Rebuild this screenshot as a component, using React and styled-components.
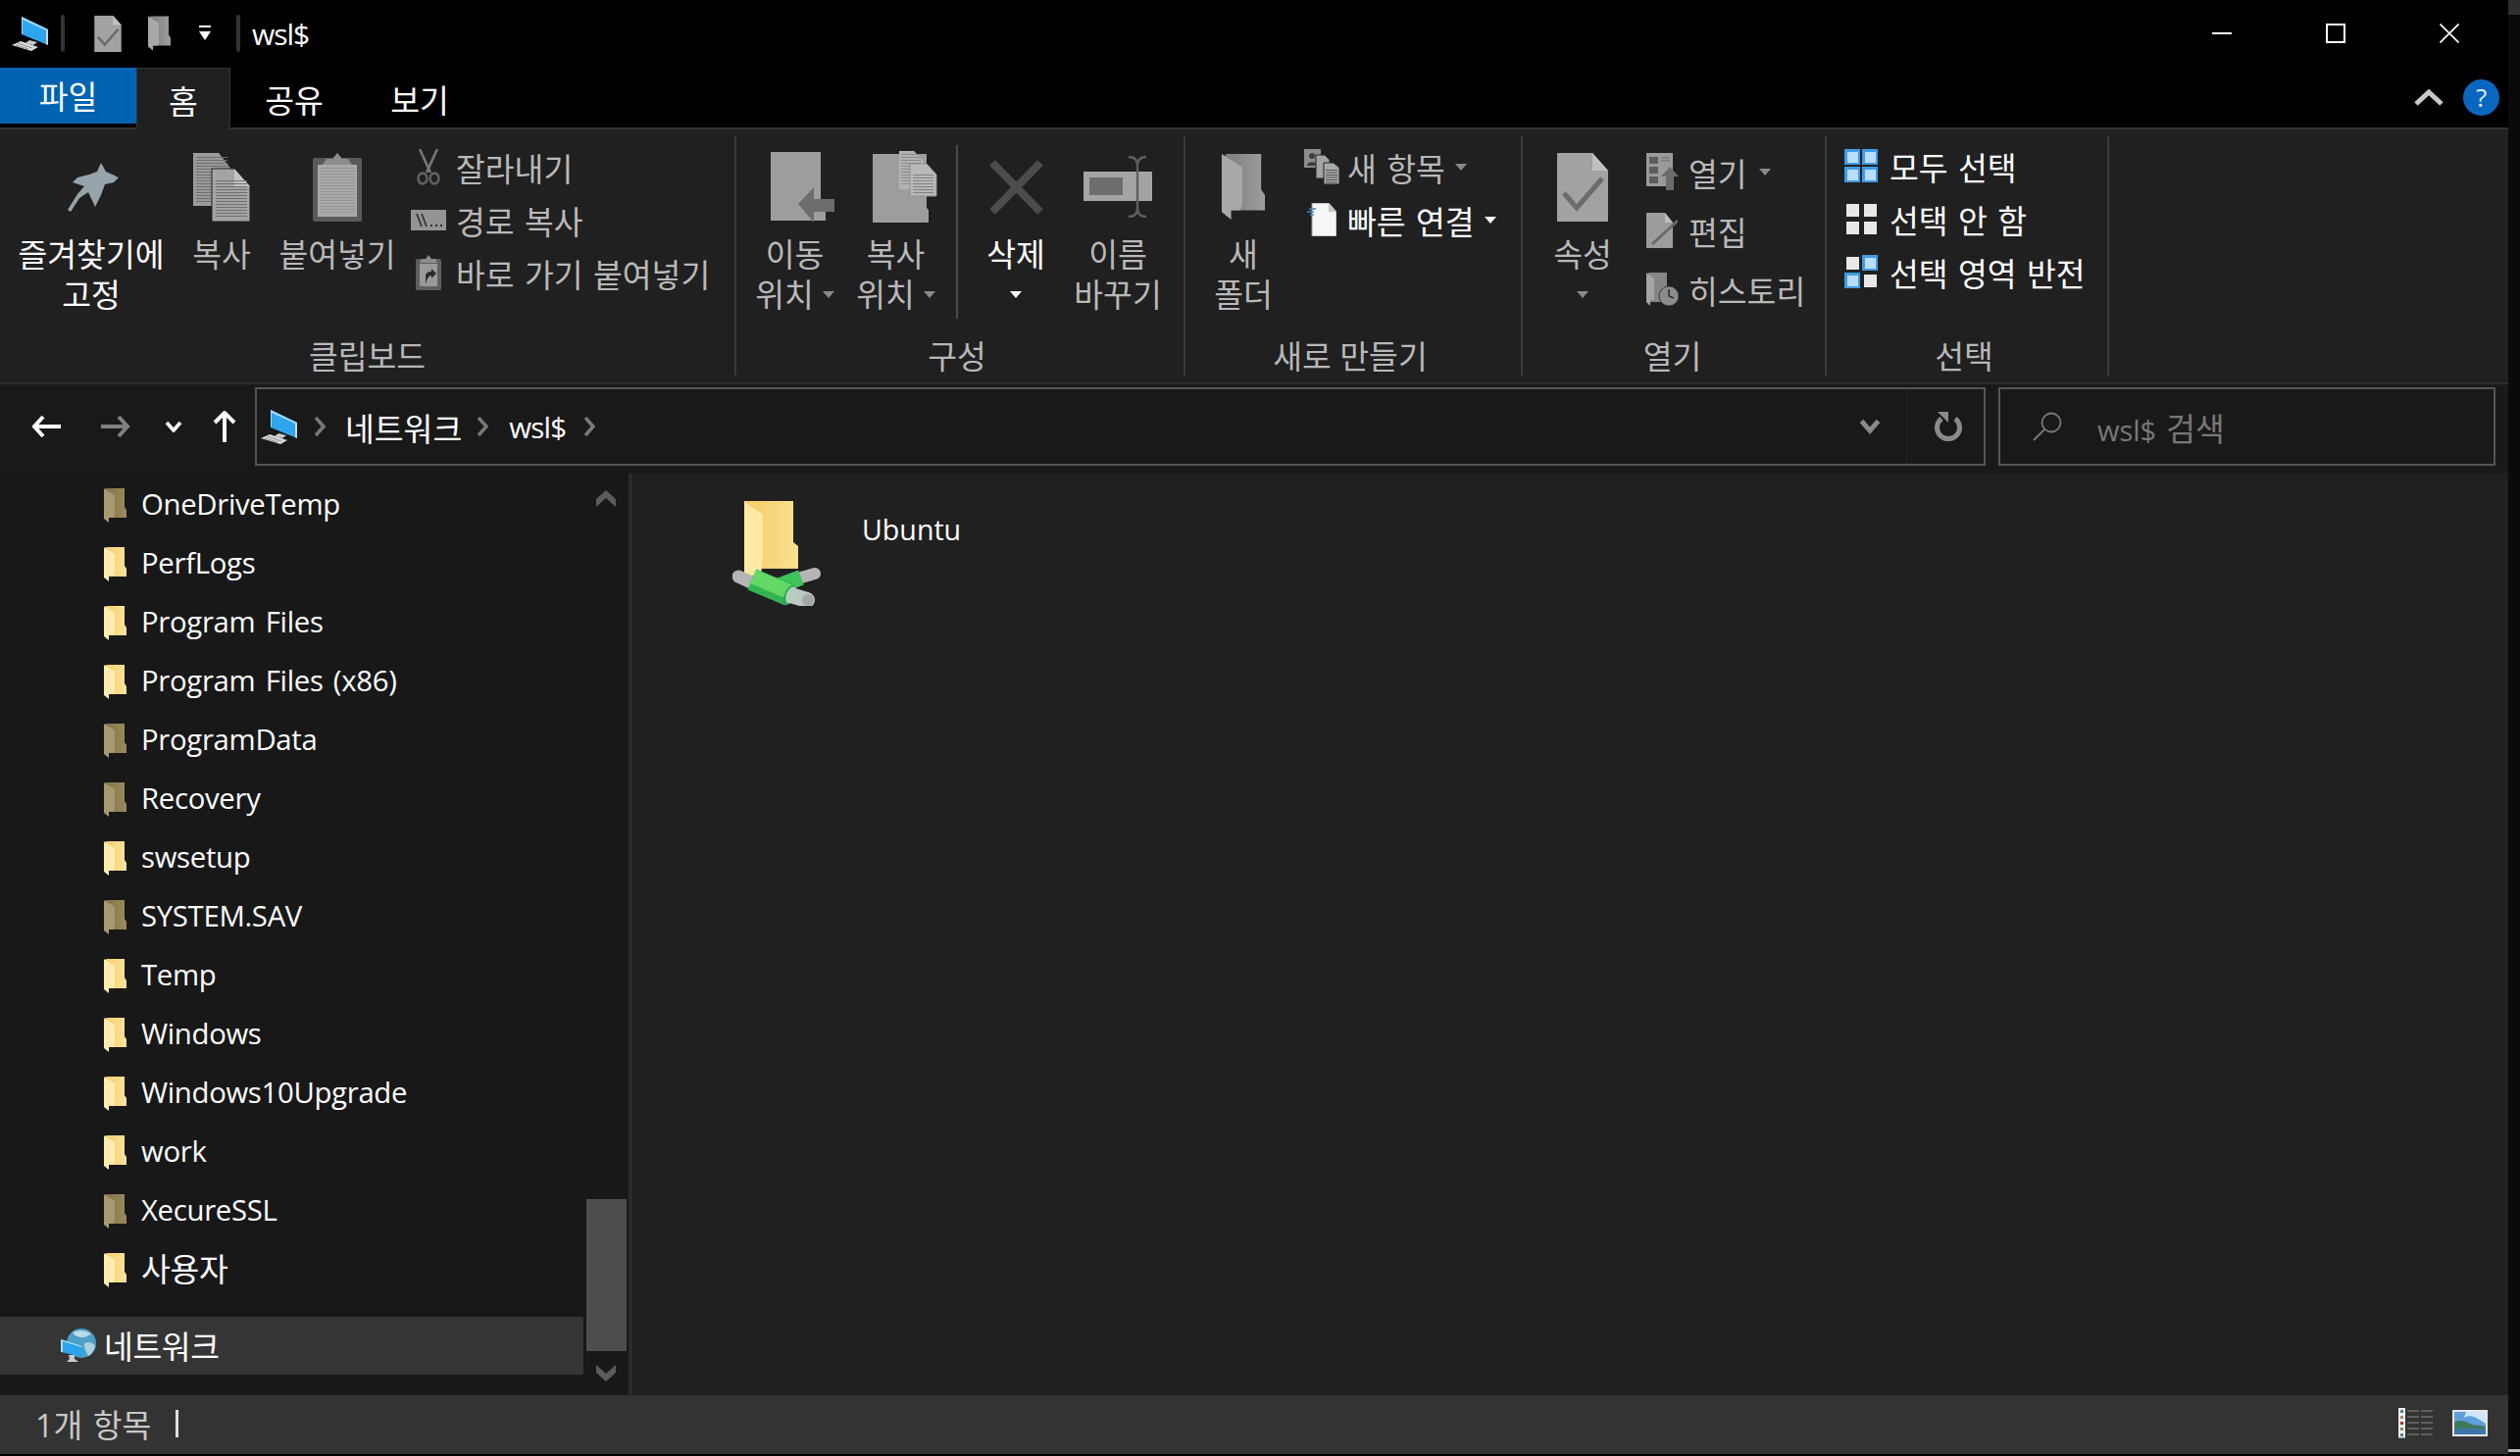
import styled, { createGlobalStyle } from "styled-components";

const GlobalStyle = createGlobalStyle`
  html, body {
    margin: 0;
    height: 100%;
    background: #000;
    overflow: hidden;
  }
  body {
    font-family: "Open Sans", "Noto Sans CJK KR", "Noto Sans", sans-serif;
    font-size: 30px;
    color: #fff;
  }
`;

const KO_SIZE = "32.4px";

const Screen = styled.div`
  display: flex;
  width: 2570px;
  height: 1485px;
  background: #000;
`;

const Win = styled.div`
  display: flex;
  flex-direction: column;
  width: 2558px;
  height: 1483px;
`;

const EdgeStrip = styled.div`
  flex: 1;
  display: flex;
  flex-direction: column;
  justify-content: flex-end;
  padding-bottom: 4px;
  background: linear-gradient(#2e2e2e 0, #2e2e2e 15px, #0a0a0a 15px);
`;

const EdgeBit = styled.div`
  height: 3px;
  background: #bbb;
`;

/* title bar */
const TitleBar = styled.div`
  display: flex;
  align-items: center;
  height: 68px;
  flex: none;
  background: #000;
`;

const QuickGroup = styled.div`
  display: flex;
  align-items: center;
  padding-left: 12px;
`;

const TitleSep = styled.div`
  width: 4px;
  height: 38px;
  border-radius: 2px;
  background: #333;
  margin: ${(p) => p.$m};
`;

const QuickIcon = styled.span`
  display: flex;
  margin-right: ${(p) => p.$mr}px;
`;

const TitleText = styled.div`
  font-size: 30px;
  letter-spacing: -1px;
  margin-left: 12px;
`;

const WinControls = styled.div`
  display: flex;
  margin-left: auto;
  margin-right: 2px;
`;

const WinBtn = styled.div`
  width: 116px;
  height: 46px;
  display: flex;
  align-items: center;
  justify-content: center;
`;

/* tabs */
const TabRow = styled.div`
  display: flex;
  align-items: flex-start;
  height: 64px;
  flex: none;
  background: #000;
  border-bottom: 2px solid #343434;
  box-sizing: border-box;
`;

const FileTab = styled.div`
  width: 139px;
  height: 57px;
  margin-top: 1px;
  background: #0063b1;
  text-align: center;
  line-height: 58px;
  font-size: ${KO_SIZE};
`;

const Tab = styled.div`
  width: ${(p) => p.$w}px;
  height: 63px;
  margin-top: 1px;
  text-align: center;
  line-height: 66px;
  font-size: ${KO_SIZE};
  box-sizing: border-box;
  background: ${(p) => (p.$active ? "#202020" : "transparent")};
  border: ${(p) => (p.$active ? "1px solid #343434" : "none")};
  border-bottom: none;
`;

const HelpArea = styled.div`
  display: flex;
  align-items: center;
  gap: 20px;
  margin-left: auto;
  padding: 13px 9px 0 0;
`;

const HelpCircle = styled.div`
  width: 37px;
  height: 37px;
  border-radius: 50%;
  background: #0a67bf;
  text-align: center;
  line-height: 37px;
  font-size: 26px;
  color: #dcebf8;
`;

/* ribbon */
const Ribbon = styled.div`
  display: flex;
  height: 260px;
  flex: none;
  padding-top: 7px;
  box-sizing: border-box;
  background: #202020;
  border-bottom: 2px solid #2e2e2e;
`;

const Group = styled.div`
  width: ${(p) => p.$w}px;
  height: 244px;
  flex: none;
  display: flex;
  flex-direction: column;
  box-sizing: border-box;
  border-right: 2px solid #3a3a3a;
`;

const GroupBody = styled.div`
  display: flex;
  flex: 1;
  padding-left: ${(p) => p.$pl || 0}px;
  min-height: 0;
`;

const GroupLabel = styled.div`
  height: 44px;
  padding-right: ${(p) => p.$pr || 0}px;
  text-align: center;
  color: #b8b8b8;
  font-size: ${KO_SIZE};
  line-height: 48px;
`;

const LargeBtn = styled.div`
  width: ${(p) => p.$w}px;
  flex: none;
  display: flex;
  flex-direction: column;
  align-items: center;
  color: ${(p) => (p.$on ? "#fff" : "#b9b9b9")};
`;

const IconSlot = styled.div`
  height: 90px;
  flex: none;
  display: flex;
  align-items: center;
  justify-content: center;
  padding-top: 13px;
  padding-left: ${(p) => p.$dx || 0}px;
  box-sizing: border-box;
  margin-bottom: 10px;
`;

const LabelLine = styled.div`
  display: flex;
  align-items: center;
  gap: 9px;
  height: 41px;
  line-height: 41px;
  white-space: nowrap;
  font-size: ${KO_SIZE};
`;

const InnerSep = styled.div`
  width: 2px;
  height: 177px;
  margin: 9px 0 0 10px;
  flex: none;
  background: #4a4a4a;
`;

const SmallCol = styled.div`
  display: flex;
  flex-direction: column;
  margin: ${(p) => p.$m};
`;

const SmallBtn = styled.div`
  display: flex;
  align-items: center;
  height: ${(p) => p.$h}px;
  white-space: nowrap;
  font-size: ${KO_SIZE};
  word-spacing: 2px;
  color: ${(p) => (p.$on ? "#fff" : "#b9b9b9")};
`;

const SmallIcon = styled.span`
  width: ${(p) => p.$w}px;
  flex: none;
  display: flex;
  justify-content: center;
`;

const Caret = styled.span`
  width: 0;
  height: 0;
  flex: none;
  margin-left: ${(p) => p.$ml || 0}px;
  border-left: 6px solid transparent;
  border-right: 6px solid transparent;
  border-top: 7px solid ${(p) => (p.$on ? "#fff" : "#8a8a8a")};
`;

/* nav row */
const NavRow = styled.div`
  display: flex;
  align-items: center;
  height: 91px;
  flex: none;
  box-sizing: border-box;
  background: #191919;
  padding-bottom: 5px;
`;

const NavBtns = styled.div`
  display: flex;
  align-items: center;
  width: 260px;
  flex: none;
  padding-left: 32px;
  box-sizing: border-box;
`;

const NavBtn = styled.span`
  display: flex;
  margin-right: ${(p) => p.$mr}px;
`;

const AddressBox = styled.div`
  display: flex;
  align-items: center;
  width: 1765px;
  height: 80px;
  flex: none;
  box-sizing: border-box;
  border: 2px solid #555;
  padding-left: 4px;
`;

const CrumbIcon = styled.span`
  display: flex;
  margin-right: 17px;
`;

const Crumb = styled.span`
  font-size: ${(p) => (p.$ko ? KO_SIZE : "29.5px")};
  letter-spacing: ${(p) => p.$ls || 0}px;
  margin: 0 ${(p) => p.$mr}px 0 ${(p) => p.$ml}px;
`;

const AddressEnd = styled.div`
  display: flex;
  align-items: center;
  height: 100%;
  margin-left: auto;
`;

const DropZone = styled.div`
  width: 78px;
  height: 100%;
  display: flex;
  align-items: center;
  justify-content: center;
  border-right: 1px solid #222;
  padding-left: 2px;
  box-sizing: border-box;
`;

const RefreshZone = styled.div`
  width: 78px;
  display: flex;
  justify-content: center;
  padding-left: 6px;
  box-sizing: border-box;
`;

const SearchBox = styled.div`
  display: flex;
  align-items: center;
  width: 507px;
  height: 80px;
  margin-left: 13px;
  flex: none;
  box-sizing: border-box;
  border: 2px solid #555;
  padding-left: 33px;
  gap: 36px;
  color: #777;
  font-size: 29px;
`;

const SearchWord = styled.span`
  font-size: ${KO_SIZE};
  margin-left: 10px;
`;

/* content */
const Content = styled.div`
  display: flex;
  flex: 1;
  min-height: 0;
`;

const Sidebar = styled.div`
  display: flex;
  width: 641px;
  flex: none;
  background: #181818;
`;

const TreeList = styled.div`
  width: 595px;
  flex: none;
  padding-top: 2px;
`;

const TreeRow = styled.div`
  display: flex;
  align-items: center;
  height: 60px;
  padding-left: 106px;
  gap: 15px;
`;

const TreeName = styled.span`
  font-size: ${(p) => (p.$ko ? KO_SIZE : "29.3px")};
  word-spacing: 3px;
  letter-spacing: -0.3px;
  margin-bottom: ${(p) => (p.$ko ? 6 : 3)}px;
`;

const NetworkRow = styled.div`
  display: flex;
  align-items: center;
  gap: 8px;
  height: 59px;
  margin-top: 18px;
  padding-left: 62px;
  background: #353535;
  font-size: ${KO_SIZE};
  letter-spacing: -0.4px;
`;

const NetworkName = styled.span`
  margin-bottom: 2px;
`;

const ScrollCol = styled.div`
  width: 46px;
  flex: none;
  display: flex;
  flex-direction: column;
  align-items: center;
  padding: 17px 0 14px;
  box-sizing: border-box;
`;

const ScrollTrack = styled.div`
  flex: 1;
  width: 41px;
  display: flex;
  align-items: flex-end;
`;

const ScrollThumb = styled.div`
  width: 100%;
  height: 155px;
  margin-bottom: 14px;
  background: #4d4d4d;
`;

const Splitter = styled.div`
  width: 4px;
  flex: none;
  background: #2b2b2b;
`;

const Main = styled.div`
  flex: 1;
  background: #202020;
  padding: 28px 0 0 102px;
`;

const Tile = styled.div`
  display: flex;
  align-items: flex-start;
  gap: 42px;
`;

const TileName = styled.div`
  font-size: 28.6px;
  line-height: 58px;
`;

/* status bar */
const StatusBar = styled.div`
  display: flex;
  align-items: center;
  height: 60px;
  flex: none;
  padding: 0 21px 3px 36px;
  box-sizing: border-box;
  background: #333;
  color: #c8c8c8;
  font-size: ${KO_SIZE};
  word-spacing: 2px;
`;

const StatusSep = styled.div`
  width: 3px;
  height: 28px;
  margin-left: 25px;
  background: #e0e0e0;
`;

const ViewIcons = styled.div`
  display: flex;
  align-items: center;
  gap: 19px;
  margin-left: auto;
`;

/* icons */
const folderTones = {
  yellow: ["#f6cf6e", "#fbe39a", "#ffedb0"],
  dim: ["#85744a", "#9a8a5c", "#a89a70"],
  gray: ["#7d7d7d", "#9e9e9e", "#a8a8a8"],
};

function Folder({ tone = "yellow", w = 23, h = 35 }) {
  const [a, b, c] = folderTones[tone];
  const id = `fold-${tone}`;
  return (
    <svg width={w} height={h} viewBox="0 0 23 35">
      <defs>
        <linearGradient id={id} x1="0" x2="1" y1="0" y2="0">
          <stop offset="0" stopColor={a} />
          <stop offset="1" stopColor={b} />
        </linearGradient>
      </defs>
      <path d="M2 0H21V19L23 22V30H2Z" fill={`url(#${id})`} />
      <path d="M0 0L11 7V26L10 30H5V35L0 31Z" fill={c} />
    </svg>
  );
}

function ComputerIcon({ w = 37, h = 35 }) {
  return (
    <svg width={w} height={h} viewBox="0 0 37 35">
      <path d="M10 0L37 13V29L10 18Z" fill="#2ea6ee" />
      <path d="M10 0L37 13L35 14L11 3V17L10 18Z" fill="#9edcff" />
      <path d="M35 14V28L37 29V13Z" fill="#cfd6da" />
      <path d="M18 24L26 26L22 29L14 27Z" fill="#c9cdd0" />
      <path d="M9 25L27 31L20 35L0 29Z" fill="#d8dadb" />
      <path d="M6 27L21 32M4 29L17 33" stroke="#8d8f90" strokeWidth="1" />
    </svg>
  );
}

function NetworkIcon() {
  return (
    <svg width="36" height="36" viewBox="0 0 36 36">
      <circle cx="21" cy="15" r="15" fill="#4d9fc6" />
      <path d="M12 4C17 1 26 1 31 6C27 7 25 10 21 9C17 8 14 8 12 4Z" fill="#b7dbe8" />
      <path d="M24 15C28 13 33 14 35 18C34 23 31 27 28 28C26 24 23 19 24 15Z" fill="#a9d0df" />
      <path d="M0 11L22 18V29L0 24Z" fill="#2ca3ea" />
      <path d="M0 11L22 18L21 19L2 13V24L0 24Z" fill="#a8e0fb" />
      <path d="M8 27H14V31L18 34H6L9 31Z" fill="#c8ccce" />
    </svg>
  );
}

function NetworkFolderIcon() {
  return (
    <svg width="90" height="107" viewBox="0 0 90 107">
      <defs>
        <linearGradient id="share-back" x1="0" x2="1" y1="0" y2="0">
          <stop offset="0" stopColor="#f4cc66" />
          <stop offset="1" stopColor="#fbe191" />
        </linearGradient>
      </defs>
      <path d="M12 0H62V42L67 46V69H12Z" fill="url(#share-back)" />
      <path d="M12 0L31 14V58L29 76H12Z" fill="#ffe9a4" />
      <path d="M6 77L30 88" stroke="#b5b5b5" strokeWidth="13" strokeLinecap="round" />
      <path d="M60 81L84 74" stroke="#b5b5b5" strokeWidth="12" strokeLinecap="round" />
      <path d="M38 90L70 78" stroke="#3ec45a" strokeWidth="16" />
      <path d="M56 95L76 101" stroke="#b9c9c0" strokeWidth="16" strokeLinecap="round" />
      <circle cx="77" cy="101" r="6" fill="#a5a5a5" />
      <path d="M20 80L58 96" stroke="#34b552" strokeWidth="23" />
      <path d="M21 77L59 93" stroke="#63d865" strokeWidth="15" />
      <ellipse cx="58" cy="96" rx="5" ry="11" transform="rotate(23 58 96)" fill="#2aa85a" />
      <ellipse cx="60" cy="96" rx="5" ry="9" transform="rotate(23 60 96)" fill="#b4d0c0" />
    </svg>
  );
}

function PinIcon() {
  return (
    <svg width="52" height="50" viewBox="0 0 52 50" style={{ marginLeft: 3 }}>
      <path
        d="M34 0L39 9L52 15L47 20L38 22L34 33L28 45L21 30L12 36L3 50L0 48L10 32L17 24L5 20L10 15L22 12L30 9Z"
        fill="#97a3aa"
      />
    </svg>
  );
}

function DocLines({ x, y, w, n, gap = 3, color = "#6f6f6f" }) {
  return Array.from({ length: n }, (_, i) => (
    <rect key={i} x={x} y={y + i * gap} width={w} height="1" fill={color} />
  ));
}

function CopyIcon() {
  return (
    <svg width="58" height="70" viewBox="0 0 58 70">
      <path d="M0 0H26L40 18V54H0Z" fill="#9a9a9a" />
      <DocLines x={3} y={4} w={32} n={16} />
      <path d="M19 16H42L58 34V70H19Z" fill="#a4a4a4" stroke="#202020" strokeWidth="1" />
      <path d="M42 16L58 34H42Z" fill="#c4c4c4" />
      <DocLines x={23} y={28} w={32} n={13} />
    </svg>
  );
}

function ClipboardIcon() {
  return (
    <svg width="50" height="70" viewBox="0 0 50 70">
      <rect x="0" y="5" width="50" height="65" rx="2" fill="#5a5a5a" />
      <rect x="5" y="12" width="40" height="53" fill="#a9a9a9" />
      <DocLines x={7} y={15} w={36} n={16} color="#959595" />
      <path d="M25 0L30 6H36L40 12H10L14 6H20Z" fill="#8d8d8d" />
    </svg>
  );
}

function ScissorsIcon() {
  return (
    <svg width="24" height="37" viewBox="0 0 24 37">
      <path d="M3 0L14 24M21 0L10 24" stroke="#777" strokeWidth="2.6" fill="none" />
      <ellipse cx="6" cy="30" rx="4.4" ry="5.4" stroke="#616161" strokeWidth="2.6" fill="none" />
      <ellipse cx="18" cy="30" rx="4.4" ry="5.4" stroke="#616161" strokeWidth="2.6" fill="none" />
    </svg>
  );
}

function PathIcon() {
  return (
    <svg width="36" height="21" viewBox="0 0 36 21">
      <rect width="36" height="21" fill="#939393" />
      <path d="M6 4L11 17M11 4L16 17" stroke="#2b2b2b" strokeWidth="1.6" />
      <path d="M20 16H22M25 16H27M30 16H32" stroke="#2b2b2b" strokeWidth="2" />
    </svg>
  );
}

function ShortcutPasteIcon() {
  return (
    <svg width="26" height="36" viewBox="0 0 26 36">
      <rect y="4" width="26" height="32" rx="2" fill="#5f5f5f" />
      <rect x="4" y="9" width="18" height="23" fill="#9a9a9a" />
      <path d="M13 0L16 4H20L22 8H4L6 4H10Z" fill="#8c8c8c" />
      <path d="M10 30V22C10 18 13 17 16 17V14L21 19L16 24V21C13 21 12 24 10 30Z" fill="#2a2a2a" />
    </svg>
  );
}

function MoveToIcon() {
  return (
    <svg width="65" height="72" viewBox="0 0 65 72">
      <path d="M0 0H51V55L56 60V70H0Z" fill="#9d9d9d" />
      <path d="M28 53L44 36V48H65V61H44V72Z" fill="#6d6d6d" />
    </svg>
  );
}

function CopyToIcon() {
  return (
    <svg width="66" height="73" viewBox="0 0 66 73">
      <path d="M0 3H55V58L57 60V73H0Z" fill="#9d9d9d" />
      <path d="M27 0H42L52 10V39H27Z" fill="#b3b3b3" />
      <DocLines x={29} y={3} w={20} n={11} color="#8a8a8a" />
      <path d="M38 13H55L65 24V46H38Z" fill="#b9b9b9" stroke="#8f8f8f" strokeWidth="1" />
      <DocLines x={41} y={24} w={21} n={7} color="#818181" />
    </svg>
  );
}

function DeleteIcon() {
  return (
    <svg width="57" height="56" viewBox="0 0 57 56">
      <path d="M4 3L53 53M53 3L4 53" stroke="#4c4c4c" strokeWidth="8" />
    </svg>
  );
}

function RenameIcon() {
  return (
    <svg width="70" height="63" viewBox="0 0 70 63">
      <rect y="16" width="70" height="30" fill="#a4a4a4" />
      <rect x="6" y="22" width="34" height="18" fill="#6d6d6d" />
      <path
        d="M46 1C52 1 55 4 55 10V53C55 59 52 62 46 62M64 1C58 1 55 4 55 10M55 53C55 59 58 62 64 62"
        stroke="#5f5f5f"
        strokeWidth="2.4"
        fill="none"
      />
    </svg>
  );
}

function NewItemIcon() {
  return (
    <svg width="36" height="36" viewBox="0 0 36 36">
      <rect width="17" height="19" fill="#8d8d8d" />
      <circle cx="8" cy="7" r="3" fill="#3e3e3e" />
      <path d="M3 17C3 12 13 12 13 17Z" fill="#3e3e3e" />
      <path d="M12 6H21L26 11V30H12Z" fill="#a3a3a3" stroke="#202020" />
      <path d="M20 14H30L36 19V36H20Z" fill="#a9a9a9" stroke="#202020" />
      <DocLines x={22} y={21} w={12} n={6} gap={2.5} color="#555" />
    </svg>
  );
}

function QuickLinkIcon() {
  return (
    <svg width="30" height="34" viewBox="0 0 30 34">
      <path d="M5 0H22L30 9V34H5Z" fill="#f4f6f8" stroke="#9a9a9a" />
      <path d="M22 0L30 9H22Z" fill="#c4c8cc" />
      <path d="M2 6H9M0 9H7M3 12H7" stroke="#3f87c4" strokeWidth="1.6" />
    </svg>
  );
}

function PropertiesIcon({ w = 52, h = 70 }) {
  return (
    <svg width={w} height={h} viewBox="0 0 52 70">
      <path d="M0 0H36L52 18V70H0Z" fill="#a2a2a2" />
      <path d="M36 0L52 18H36Z" fill="#c1c1c1" />
      <path d="M7 41L20 56L46 26" stroke="#6c6c6c" strokeWidth="5" fill="none" />
    </svg>
  );
}

function OpenIcon() {
  return (
    <svg width="33" height="38" viewBox="0 0 33 38">
      <path d="M0 0H27V34H0Z" fill="#9a9a9a" />
      <rect x="3" y="4" width="9" height="7" fill="#5c5c5c" />
      <rect x="3" y="14" width="9" height="7" fill="#5c5c5c" />
      <rect x="3" y="24" width="9" height="7" fill="#5c5c5c" />
      <path d="M15 5H24M15 8H24" stroke="#6a6a6a" />
      <path d="M24 14L33 24H28V38H20V24H15Z" fill="#6b6b6b" />
    </svg>
  );
}

function EditIcon() {
  return (
    <svg width="32" height="36" viewBox="0 0 32 36">
      <path d="M0 0H19L27 10V36H0Z" fill="#9c9c9c" />
      <path d="M19 0L27 10H19Z" fill="#bdbdbd" />
      <path d="M6 32L32 8" stroke="#6a6a6a" strokeWidth="3" />
    </svg>
  );
}

function HistoryIcon() {
  return (
    <svg width="33" height="34" viewBox="0 0 33 34">
      <path d="M2 0H21V18L23 20V30H2Z" fill="#868686" />
      <path d="M0 0L8 6V28H4V34L0 30Z" fill="#a3a3a3" />
      <circle cx="23" cy="24" r="10" fill="#8c8c8c" stroke="#3a3a3a" />
      <path d="M23 17V24L28 26" stroke="#2e2e2e" strokeWidth="1.6" fill="none" />
    </svg>
  );
}

function SelectIcon({ cells }) {
  const pos = [
    [0, 0],
    [18, 0],
    [0, 18],
    [18, 18],
  ];
  return (
    <svg width="34" height="34" viewBox="0 0 34 34">
      {pos.map(([x, y], i) =>
        cells[i] ? (
          <g key={i}>
            <rect x={x} y={y} width="16" height="16" fill="#3f9ce4" />
            <rect x={x + 3} y={y + 3} width="11" height="11" fill="#b9deff" />
          </g>
        ) : (
          <rect key={i} x={x + 2} y={y + 2} width="13" height="13" fill="#e8e8e8" />
        ),
      )}
    </svg>
  );
}

function LineArrow({ dir = "left", color = "#fff" }) {
  return (
    <svg width="30" height="24" viewBox="0 0 30 24" style={{ transform: dir === "right" ? "scaleX(-1)" : "none" }}>
      <path d="M12 2L3 12L12 22M3 12H30" stroke={color} strokeWidth="4" fill="none" />
    </svg>
  );
}

function Chevron({ size = 18, color = "#fff", weight = 3.6 }) {
  return (
    <svg width={size} height={size * 0.7} viewBox="0 0 18 12.6">
      <path d="M2 2L9 10L16 2" stroke={color} strokeWidth={weight} fill="none" />
    </svg>
  );
}

function CrumbSep() {
  return (
    <svg width="12" height="20" viewBox="0 0 12 20">
      <path d="M2 1L10 10L2 19" stroke="#777" strokeWidth="3.6" fill="none" />
    </svg>
  );
}

function DoubleChevron({ up }) {
  return (
    <svg width="20" height="17" viewBox="0 0 20 17" style={{ transform: up ? "none" : "scaleY(-1)" }}>
      <path d="M0 9L10 0L20 9V17L10 8L0 17Z" fill="#5c5c5c" />
    </svg>
  );
}

function RefreshIcon() {
  return (
    <svg width="28" height="30" viewBox="0 0 28 30">
      <path d="M7 7A11.5 11.5 0 1 0 21 7" stroke="#8a8a8a" strokeWidth="5" fill="none" />
      <path d="M3 0H14V11Z" fill="#8a8a8a" />
    </svg>
  );
}

function SearchGlyph() {
  return (
    <svg width="30" height="30" viewBox="0 0 30 30">
      <circle cx="19" cy="11" r="9.5" stroke="#777" strokeWidth="1.8" fill="none" />
      <path d="M12 18L1 29" stroke="#777" strokeWidth="2" />
    </svg>
  );
}

function DetailsViewIcon() {
  return (
    <svg width="36" height="31" viewBox="0 0 36 31">
      {[0, 6, 12, 18, 24].map((y, i) => (
        <g key={y}>
          <rect x="0" y={y} width="7" height="6.5" fill="#eee" />
          <rect
            x="2"
            y={y + 2}
            width="3"
            height="3"
            fill={["#4f7f98", "#a08a5c", "#b03030", "#8f8f5f", "#4f7f98"][i]}
          />
          <path d={`M9 ${y + 3}H21M23 ${y + 3}H35`} stroke="#8a8a8a" strokeWidth="1" />
        </g>
      ))}
    </svg>
  );
}

function LargeViewIcon() {
  return (
    <svg width="36" height="27" viewBox="0 0 36 27">
      <rect width="36" height="27" fill="#e6e6e6" />
      <rect x="2" y="2" width="32" height="23" fill="#5f9fdc" />
      <path d="M12 8C18 4 24 7 34 14V2H14Z" fill="#cfe6f8" />
      <path d="M2 13C8 9 14 12 20 15L34 17V19H2Z" fill="#3f7a5a" />
      <rect x="2" y="19" width="32" height="6" fill="#3c76a8" />
    </svg>
  );
}

const TREE = [
  ["OneDriveTemp", "dim"],
  ["PerfLogs", "yellow"],
  ["Program Files", "yellow"],
  ["Program Files (x86)", "yellow"],
  ["ProgramData", "dim"],
  ["Recovery", "dim"],
  ["swsetup", "yellow"],
  ["SYSTEM.SAV", "dim"],
  ["Temp", "yellow"],
  ["Windows", "yellow"],
  ["Windows10Upgrade", "yellow"],
  ["work", "yellow"],
  ["XecureSSL", "dim"],
  ["사용자", "yellow"],
];

function Large({ w, icon, lines, on, caret, dx }) {
  return (
    <LargeBtn $w={w} $on={on}>
      <IconSlot $dx={dx}>{icon}</IconSlot>
      {lines.map((line, i) => (
        <LabelLine key={i}>
          {line}
          {caret && i === lines.length - 1 && <Caret $on={on} />}
        </LabelLine>
      ))}
    </LargeBtn>
  );
}

export default function App() {
  return (
    <Screen>
      <GlobalStyle />
      <Win>
        <TitleBar>
          <QuickGroup>
            <ComputerIcon />
            <TitleSep $m="0 30px 0 13px" />
            <QuickIcon $mr={27}>
              <PropertiesIcon w={28} h={37} />
            </QuickIcon>
            <QuickIcon $mr={28}>
              <Folder tone="gray" w={23} h={36} />
            </QuickIcon>
            <QuickIcon $mr={25}>
              <svg width="14" height="16" viewBox="0 0 14 16">
                <path d="M1 0H13V2H1ZM1 6H13L7 15Z" fill="#fff" />
              </svg>
            </QuickIcon>
            <TitleSep $m="0" />
          </QuickGroup>
          <TitleText>wsl$</TitleText>
          <WinControls>
            <WinBtn>
              <svg width="20" height="2" viewBox="0 0 20 2">
                <rect width="20" height="2" fill="#fff" />
              </svg>
            </WinBtn>
            <WinBtn>
              <svg width="20" height="20" viewBox="0 0 20 20">
                <rect x="1" y="1" width="18" height="18" stroke="#fff" strokeWidth="2" fill="none" />
              </svg>
            </WinBtn>
            <WinBtn>
              <svg width="20" height="20" viewBox="0 0 20 20">
                <path d="M0.5 0.5L19.5 19.5M19.5 0.5L0.5 19.5" stroke="#fff" strokeWidth="1.6" />
              </svg>
            </WinBtn>
          </WinControls>
        </TitleBar>

        <TabRow>
          <FileTab>파일</FileTab>
          <Tab $w={96} $active>
            홈
          </Tab>
          <Tab $w={130}>공유</Tab>
          <Tab $w={126}>보기</Tab>
          <HelpArea>
            <svg width="30" height="18" viewBox="0 0 30 18">
              <path d="M2 15L15 3L28 15" stroke="#c8c8c8" strokeWidth="5" fill="none" />
            </svg>
            <HelpCircle>?</HelpCircle>
          </HelpArea>
        </TabRow>

        <Ribbon>
          <Group $w={751}>
            <GroupBody $pl={12}>
              <Large w={162} icon={<PinIcon />} lines={["즐겨찾기에", "고정"]} on />
              <Large w={104} icon={<CopyIcon />} lines={["복사"]} />
              <Large w={132} icon={<ClipboardIcon />} lines={["붙여넣기"]} />
              <SmallCol $m="4px 0 0 -1px">
                <SmallBtn $h={54}>
                  <SmallIcon $w={56}>
                    <ScissorsIcon />
                  </SmallIcon>
                  잘라내기
                </SmallBtn>
                <SmallBtn $h={54}>
                  <SmallIcon $w={56}>
                    <PathIcon />
                  </SmallIcon>
                  경로 복사
                </SmallBtn>
                <SmallBtn $h={54}>
                  <SmallIcon $w={56}>
                    <ShortcutPasteIcon />
                  </SmallIcon>
                  바로 가기 붙여넣기
                </SmallBtn>
              </SmallCol>
            </GroupBody>
            <GroupLabel>클립보드</GroupLabel>
          </Group>

          <Group $w={458}>
            <GroupBody $pl={8}>
              <Large w={103} dx={16} icon={<MoveToIcon />} lines={["이동", "위치"]} caret />
              <Large w={103} dx={18} icon={<CopyToIcon />} lines={["복사", "위치"]} caret />
              <InnerSep />
              <Large w={118} on icon={<DeleteIcon />} lines={["삭제", <Caret key="c" $on />]} />
              <Large w={90} icon={<RenameIcon />} lines={["이름", "바꾸기"]} />
            </GroupBody>
            <GroupLabel $pr={6}>구성</GroupLabel>
          </Group>

          <Group $w={344}>
            <GroupBody $pl={20}>
              <Large w={78} icon={<Folder tone="gray" w={46} h={67} />} lines={["새", "폴더"]} />
              <SmallCol $m="4px 0 0 14px">
                <SmallBtn $h={54}>
                  <SmallIcon $w={53}>
                    <NewItemIcon />
                  </SmallIcon>
                  새 항목
                  <Caret $ml={10} />
                </SmallBtn>
                <SmallBtn $h={54} $on>
                  <SmallIcon $w={53}>
                    <QuickLinkIcon />
                  </SmallIcon>
                  빠른 연결
                  <Caret $ml={10} $on />
                </SmallBtn>
              </SmallCol>
            </GroupBody>
            <GroupLabel $pr={6}>새로 만들기</GroupLabel>
          </Group>

          <Group $w={310}>
            <GroupBody $pl={14}>
              <Large w={94} icon={<PropertiesIcon />} lines={["속성", <Caret key="c" />]} />
              <SmallCol $m="6px 0 0 7px">
                <SmallBtn $h={60}>
                  <SmallIcon $w={54}>
                    <OpenIcon />
                  </SmallIcon>
                  열기
                  <Caret $ml={12} />
                </SmallBtn>
                <SmallBtn $h={60}>
                  <SmallIcon $w={54}>
                    <EditIcon />
                  </SmallIcon>
                  편집
                </SmallBtn>
                <SmallBtn $h={60}>
                  <SmallIcon $w={54}>
                    <HistoryIcon />
                  </SmallIcon>
                  히스토리
                </SmallBtn>
              </SmallCol>
            </GroupBody>
            <GroupLabel $pr={3}>열기</GroupLabel>
          </Group>

          <Group $w={288}>
            <GroupBody $pl={5}>
              <SmallCol $m="3px 0 0 0">
                <SmallBtn $h={54} $on>
                  <SmallIcon $w={59}>
                    <SelectIcon cells={[1, 1, 1, 1]} />
                  </SmallIcon>
                  모두 선택
                </SmallBtn>
                <SmallBtn $h={54} $on>
                  <SmallIcon $w={59}>
                    <SelectIcon cells={[0, 0, 0, 0]} />
                  </SmallIcon>
                  선택 안 함
                </SmallBtn>
                <SmallBtn $h={54} $on>
                  <SmallIcon $w={59}>
                    <SelectIcon cells={[0, 1, 1, 0]} />
                  </SmallIcon>
                  선택 영역 반전
                </SmallBtn>
              </SmallCol>
            </GroupBody>
            <GroupLabel $pr={6}>선택</GroupLabel>
          </Group>
        </Ribbon>

        <NavRow>
          <NavBtns>
            <NavBtn $mr={41}>
              <LineArrow />
            </NavBtn>
            <NavBtn $mr={35}>
              <LineArrow dir="right" color="#808080" />
            </NavBtn>
            <NavBtn $mr={30}>
              <Chevron />
            </NavBtn>
            <NavBtn $mr={0}>
              <svg width="26" height="32" viewBox="0 0 26 32">
                <path d="M3 12L13 2L23 12M13 2V32" stroke="#fff" strokeWidth="4" fill="none" />
              </svg>
            </NavBtn>
          </NavBtns>
          <AddressBox>
            <CrumbIcon>
              <ComputerIcon />
            </CrumbIcon>
            <CrumbSep />
            <Crumb $ko $ml={20} $mr={15}>
              네트워크
            </Crumb>
            <CrumbSep />
            <Crumb $ml={21} $mr={18} $ls={-0.8}>
              wsl$
            </Crumb>
            <CrumbSep />
            <AddressEnd>
              <DropZone>
                <Chevron size={22} color="#8a8a8a" weight={4} />
              </DropZone>
              <RefreshZone>
                <RefreshIcon />
              </RefreshZone>
            </AddressEnd>
          </AddressBox>
          <SearchBox>
            <SearchGlyph />
            <span>
              wsl$<SearchWord>검색</SearchWord>
            </span>
          </SearchBox>
        </NavRow>

        <Content>
          <Sidebar>
            <TreeList>
              {TREE.map(([name, tone]) => (
                <TreeRow key={name}>
                  <Folder tone={tone} />
                  <TreeName $ko={/[가-힣]/.test(name)}>{name}</TreeName>
                </TreeRow>
              ))}
              <NetworkRow>
                <NetworkIcon />
                <NetworkName>네트워크</NetworkName>
              </NetworkRow>
            </TreeList>
            <ScrollCol>
              <DoubleChevron up />
              <ScrollTrack>
                <ScrollThumb />
              </ScrollTrack>
              <DoubleChevron />
            </ScrollCol>
          </Sidebar>
          <Splitter />
          <Main>
            <Tile>
              <NetworkFolderIcon />
              <TileName>Ubuntu</TileName>
            </Tile>
          </Main>
        </Content>

        <StatusBar>
          1개 항목
          <StatusSep />
          <ViewIcons>
            <DetailsViewIcon />
            <LargeViewIcon />
          </ViewIcons>
        </StatusBar>
      </Win>
      <EdgeStrip>
        <EdgeBit />
      </EdgeStrip>
    </Screen>
  );
}
